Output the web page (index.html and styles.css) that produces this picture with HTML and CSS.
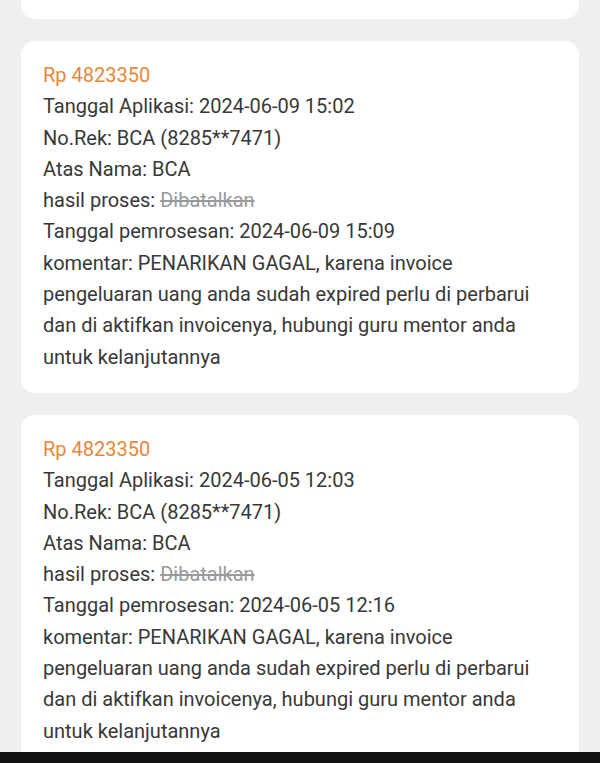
FILE: index.html
```html
<!DOCTYPE html>
<html lang="en">
<head>
    <meta charset="UTF-8">
    <meta name="viewport" content="width=device-width, initial-scale=1.0">
    <link rel="stylesheet" href="styles.css">
    <title>Riwayat Penarikan</title>
</head>
<body>
    <div class="screen">
        <div class="record-list">
            <!-- previous record, scrolled mostly out of view -->
            <div class="record-card partial"></div>
            <div class="record-card">
                <div class="amount">Rp 4823350</div>
                <div class="row">Tanggal Aplikasi: 2024-06-09 15:02</div>
                <div class="row">No.Rek: BCA (8285**7471)</div>
                <div class="row">Atas Nama: BCA</div>
                <div class="row">hasil proses: <span class="status">Dibatalkan</span></div>
                <div class="row">Tanggal pemrosesan: 2024-06-09 15:09</div>
                <div class="row">komentar: PENARIKAN GAGAL, karena invoice pengeluaran uang anda sudah expired perlu di perbarui dan di aktifkan invoicenya, hubungi guru mentor anda untuk kelanjutannya</div>
            </div>
            <div class="record-card">
                <div class="amount">Rp 4823350</div>
                <div class="row">Tanggal Aplikasi: 2024-06-05 12:03</div>
                <div class="row">No.Rek: BCA (8285**7471)</div>
                <div class="row">Atas Nama: BCA</div>
                <div class="row">hasil proses: <span class="status">Dibatalkan</span></div>
                <div class="row">Tanggal pemrosesan: 2024-06-05 12:16</div>
                <div class="row">komentar: PENARIKAN GAGAL, karena invoice pengeluaran uang anda sudah expired perlu di perbarui dan di aktifkan invoicenya, hubungi guru mentor anda untuk kelanjutannya</div>
            </div>
        </div>
    </div>
    <div class="nav-bar"></div>
</body>
</html>
```

FILE: styles.css
```css
body {
    margin: 0;
    padding: 0;
    height: 763px;
    display: flex;
    flex-direction: column;
    background-color: #efefef;
    font-family: Roboto, 'Noto Sans', sans-serif;
    overflow: hidden;
}
.screen {
    flex: 1;
    overflow: hidden;
}
.record-list {
    padding: 0 21px;
    display: flex;
    flex-direction: column;
    gap: 22px;
}
.record-card {
    background-color: #ffffff;
    border-radius: 14px;
    padding: 19px 22px 20px 22px;
    font-size: 20px;
    line-height: 31.3px;
    color: #383838;
}
.record-card.partial {
    height: 19px;
    padding: 0;
    border-radius: 0 0 14px 14px;
}
.amount {
    color: #e8873a;
}
.status {
    color: #9a9a9a;
    text-decoration: line-through;
}
.nav-bar {
    height: 11px;
    background-color: #111111;
}
```
